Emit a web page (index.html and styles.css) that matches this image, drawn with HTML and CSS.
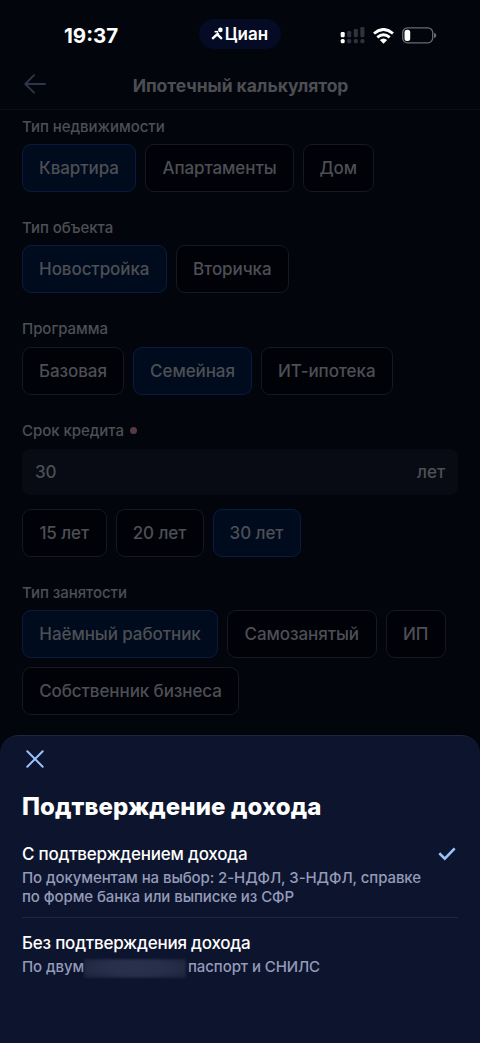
FILE: index.html
```html
<!DOCTYPE html>
<html lang="ru">
<head>
<meta charset="utf-8">
<meta name="viewport" content="width=device-width, initial-scale=1">
<title>Ипотечный калькулятор</title>
<link rel="stylesheet" href="styles.css">
</head>
<body>
<div class="screen">
  <div class="status-bar">
    <div class="time">19:37</div>
    <div class="brand">
      <svg class="brand-icon" width="13" height="14" viewBox="0 0 13 14" fill="none" stroke="#fff"><circle cx="9.400" cy="2.900" r="2.300" fill="#fff" stroke="none"/><path d="M1.200 11.800 7.600 6M6 7.200l4.900 4.600" stroke-width="2.400"/><path d="M3.600 4.700h3.400" stroke-width="1.600"/></svg>
      <span>Циан</span>
    </div>
    <div class="indicators">
      <svg width="25" height="17" viewBox="0 0 25 17" fill="#30333e"><rect x=".7" y="5" width="4" height="5.3" rx="1.2" fill="#fff"/><rect x="7.2" y="4" width="4" height="6.3" rx="1.2"/><rect x="13.8" y="2" width="4" height="8.3" rx="1.2"/><rect x="20.4" y="0" width="4" height="10.3" rx="1.2"/><rect x=".7" y="12" width="4" height="4.3" rx="1.5" fill="#fff"/><rect x="7.2" y="12" width="4" height="4.3" rx="1.5"/><rect x="13.8" y="12" width="4" height="4.3" rx="1.5"/><rect x="20.4" y="12" width="4" height="4.3" rx="1.5"/></svg>
      <svg width="21" height="16" viewBox="0 0 21 16" fill="none" stroke="#fff" stroke-width="2.900"><path d="M1 5.500Q10.500-2.600 20 5.500M4.300 9.400Q10.500 4.200 16.700 9.400"/><path d="M6.800 12.100Q10.500 8.800 14.200 12.100L10.500 15.700Z" fill="#fff" stroke="none"/></svg>
      <svg width="35" height="17" viewBox="0 0 35 17"><rect x=".7" y=".8" width="30" height="15" rx="4.800" fill="none" stroke="#696b70" stroke-width="1.300"/><rect x="2.500" y="2.700" width="5.700" height="11.200" rx="2.500" fill="#fff"/><path d="M32 5.700q2.300.7 2.300 2.700T32 11.100z" fill="#696b70"/></svg>
    </div>
  </div>
  <header class="header">
    <svg class="back" width="23" height="20" viewBox="0 0 23 20" fill="none" stroke="#303449" stroke-width="1.900" stroke-linecap="round" stroke-linejoin="round"><path d="M21 10H1.300M10 1.200 1.300 10l8.700 8.700"/></svg>
    <h1 class="header-title">Ипотечный калькулятор</h1>
  </header>
  <main class="form">
    <section class="group">
      <div class="label">Тип недвижимости</div>
      <div class="chips"><div class="chip active w-kvartira">Квартира</div><div class="chip w-apart">Апартаменты</div><div class="chip w-dom">Дом</div></div>
    </section>
    <section class="group">
      <div class="label">Тип объекта</div>
      <div class="chips"><div class="chip active w-novo">Новостройка</div><div class="chip w-vtor">Вторичка</div></div>
    </section>
    <section class="group">
      <div class="label">Программа</div>
      <div class="chips"><div class="chip w-base">Базовая</div><div class="chip active w-family">Семейная</div><div class="chip w-it">ИТ-ипотека</div></div>
    </section>
    <section class="group">
      <div class="label">Срок кредита<span class="required"></span></div>
      <div class="field"><span>30</span><span>лет</span></div>
      <div class="chips"><div class="chip w-15">15 лет</div><div class="chip w-20">20 лет</div><div class="chip active w-30">30 лет</div></div>
    </section>
    <section class="group">
      <div class="label">Тип занятости</div>
      <div class="chips"><div class="chip active w-hired">Наёмный работник</div><div class="chip w-self">Самозанятый</div><div class="chip w-ip">ИП</div><div class="chip w-owner">Собственник бизнеса</div></div>
    </section>
  </main>
  <section class="sheet">
    <svg class="close" width="18" height="18" viewBox="0 0 18 18" fill="none" stroke="#97c2fb" stroke-width="2" stroke-linecap="round"><path d="m1.300 1.300 15.400 15.400M16.700 1.300 1.300 16.700"/></svg>
    <h2 class="sheet-title">Подтверждение дохода</h2>
    <div class="option first">
      <div class="option-head"><div class="option-title">С подтверждением дохода</div>
        <svg class="check" width="18" height="14" viewBox="0 0 18 14" fill="none" stroke="#97c2fb" stroke-width="2.600"><path d="m1.300 6.300 5.500 5.300L16.700 1.400"/></svg></div>
      <div class="option-text">По документам на выбор: 2-НДФЛ, 3-НДФЛ, справке<br>по форме банка или выписке из СФР</div>
    </div>
    <div class="option second">
      <div class="option-head"><div class="option-title">Без подтверждения дохода</div></div>
      <div class="option-text masked-line"><span class="mask-before">По двум</span><span class="mask"></span><span>паспорт и СНИЛС</span></div>
    </div>
  </section>
</div>
</body>
</html>
```
FILE: styles.css
```css
* { box-sizing: border-box; }
body { margin: 0; background: #02050c; font-family: Inter, "Noto Sans", sans-serif; }
h1, h2 { margin: 0; }
svg { display: block; flex: none; }
.screen { width: 480px; height: 1043px; display: flex; flex-direction: column; overflow: hidden; background: #02050c; }
.status-bar { height: 60px; flex: none; display: grid; grid-template-columns: 199px 82px 1fr; align-items: start; padding-top: 19px; }
.time { padding: 5px 0 0 64px; color: #fff; font-size: 20.500px; line-height: 24px; font-weight: 700; }
.brand { height: 30px; display: flex; align-items: center; justify-content: center; gap: 1px; border-radius: 15px; background: #060b25; color: #fff; font-size: 17px; font-weight: 600; }
.brand-icon { margin-left: -1px; }
.indicators { display: flex; align-items: center; padding: 8px 0 0 59px; gap: 8px; }
.header { height: 50px; flex: none; display: flex; align-items: center; padding: 0 24px; border-bottom: 1px solid #0b0e15; }
.back { margin-top: -2px; }
.header-title { flex: 1; margin-right: 22px; padding-top: 2px; color: #4d4e52; text-align: center; font-size: 17.500px; line-height: 24px; font-weight: 700; letter-spacing: -.05px; }
.form { height: 625px; flex: none; padding: 6px 22px 0; display: flex; flex-direction: column; gap: 25.400px; color: #4d4f54; }
.label { height: 20px; margin-bottom: 8px; display: flex; align-items: center; font-size: 15px; font-weight: 500; letter-spacing: -.04px; }
.group { flex: none; }
.chips { display: flex; flex-wrap: wrap; gap: 9px; }
.chip { height: 48px; border: 1.500px solid #161920; border-radius: 9px; display: flex; align-items: center; justify-content: center; white-space: nowrap; background: #010108; font-size: 17px; font-weight: 500; letter-spacing: -.08px; }
.active { background: #000b1d; border-color: #0b1b3d; }
.w-kvartira { width: 114px; }
.w-apart { width: 149px; }
.w-dom { width: 70.500px; }
.w-novo { width: 144.500px; }
.w-vtor { width: 113.500px; }
.w-base { width: 102px; }
.w-family { width: 119px; }
.w-it { width: 131.500px; }
.w-15 { width: 84.500px; }
.w-20 { width: 88px; }
.w-30 { width: 88px; }
.w-hired { width: 196px; }
.w-self { width: 149.500px; }
.w-ip { width: 60.500px; }
.w-owner { width: 217px; }
.required { width: 7px; height: 7px; margin-left: 6px; border-radius: 50%; background: #583941; }
.field { height: 46px; margin: 0 0 14px; padding: 0 13px; display: flex; align-items: center; justify-content: space-between; border-radius: 8px; background: #080b13; font-size: 17px; font-weight: 500; letter-spacing: -.05px; }
.label + .field { margin-top: 8.800px; }
.sheet { flex: 1; padding: 14px 22px 0; border-top: 1px solid #20263c; border-radius: 19px 19px 0 0; background: #0d142d; }
.close { margin-left: 4px; }
.sheet-title { margin-top: 24px; color: #fff; font-size: 24px; line-height: 30px; font-weight: 800; letter-spacing: .1px; white-space: nowrap; }
.option { padding-top: 13px; }
.option.first { margin-top: 8px; height: 88px; border-bottom: 1px solid #20273e; }
.option.second { padding-top: 14px; }
.option-head { display: flex; align-items: center; justify-content: space-between; height: 22px; }
.check { margin-right: 2px; }
.option-title { color: #fff; font-size: 17px; line-height: 22px; font-weight: 500; letter-spacing: -.22px; white-space: nowrap; }
.option-text { margin-top: 4px; color: #949bb9; font-size: 15px; line-height: 18.500px; font-weight: 500; letter-spacing: -.09px; white-space: nowrap; }
.masked-line { display: flex; align-items: center; margin-top: 3px; }
.mask-before { width: 62px; }
.mask { width: 102px; height: 19px; margin: 2px 2px 0 0; flex: none; background: radial-gradient(ellipse at 50% 45%, #2b324e 0%, #272e49 50%, #182039 100%); filter: blur(1px); }
```
